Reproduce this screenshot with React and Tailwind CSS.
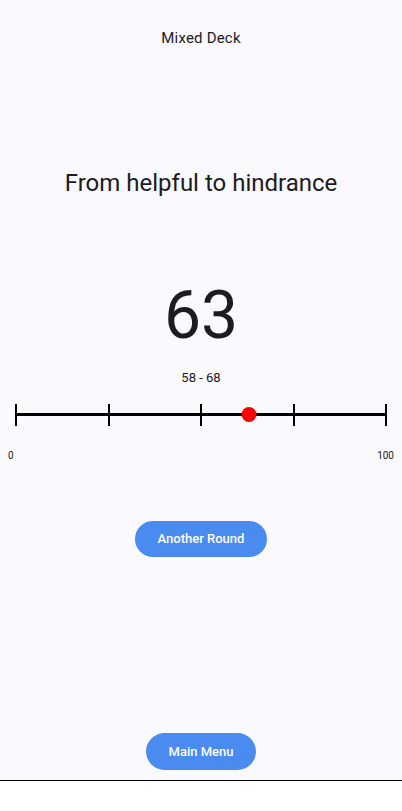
export default function App() {
  const ticks = [0, 1, 2, 3, 4];
  const value = 63;

  return (
    <div
      className="min-h-[811px] bg-[#f9f9fe] text-[#1c1b1f] flex flex-col"
      style={{ fontFamily: "Roboto, 'Noto Sans', sans-serif" }}
    >
      {/* MAIN AREA */}
      <div className="h-[781px] border-b border-black flex flex-col items-center">
        <p className="mt-[28px] text-[15px] leading-[20px] tracking-[0.2px]">Mixed Deck</p>

        <h1 className="mt-[121px] text-[24px] leading-[28px]">From helpful to hindrance</h1>

        <div className="mt-[78px] text-[66px] leading-[82px] font-normal">{value}</div>

        <p className="mt-[12px] text-[13px] leading-[18px]">58 - 68</p>

        {/* SLIDER */}
        <div className="mt-[17px] w-full px-[15px]">
          <div className="relative h-[22px]">
            <div className="absolute left-0 right-0 top-[9px] h-[3px] bg-black" />
            <div className="relative flex justify-between h-full">
              {ticks.map((t) => (
                <div key={t} className="w-[2px] h-full bg-black" />
              ))}
            </div>
            <div
              className="absolute top-[3px] w-[15px] h-[15px] rounded-full bg-[#ff0000] -translate-x-1/2"
              style={{ left: `${value}%` }}
            />
          </div>
        </div>

        <div className="mt-[24px] w-full flex justify-between px-[8px] text-[10px] leading-[12px]">
          <span>0</span>
          <span>100</span>
        </div>

        <button className="mt-[59px] w-[132px] h-[36px] rounded-full bg-[#4a8bf0] text-white text-[13px] font-medium">
          Another Round
        </button>

        <div className="flex-1" />

        <button className="mb-[10px] w-[110px] h-[37px] rounded-full bg-[#4a8bf0] text-white text-[13px] font-medium">
          Main Menu
        </button>
      </div>

      <div className="flex-1 bg-white" />
    </div>
  );
}
